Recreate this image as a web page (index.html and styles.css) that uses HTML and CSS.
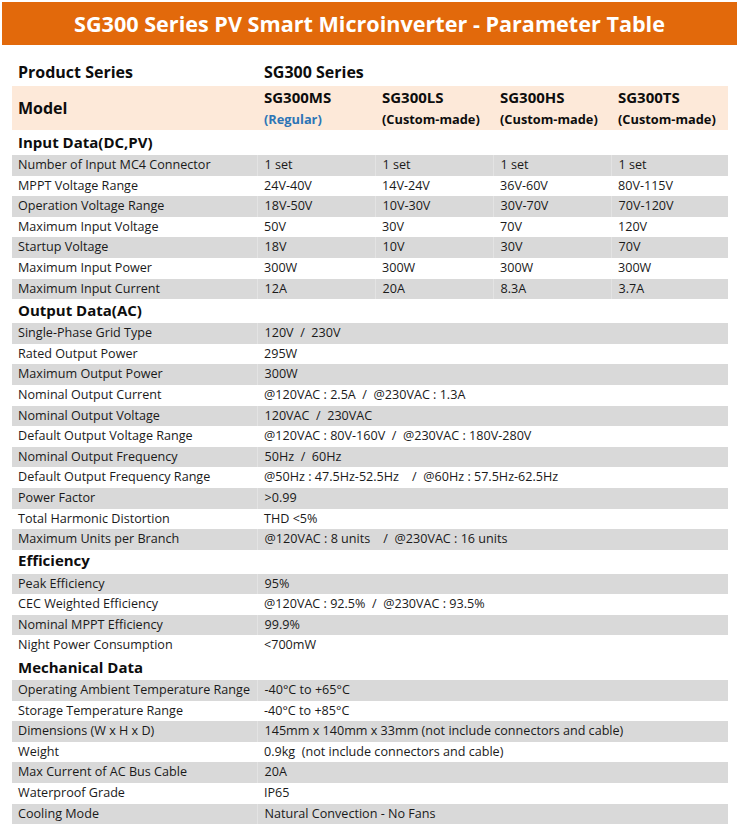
FILE: index.html
```html
<!DOCTYPE html>
<html>
<head>
<meta charset="utf-8">
<link rel="stylesheet" href="styles.css">
</head>
<body>
<div class="title">SG300 Series PV Smart Microinverter - Parameter Table</div>
<table class="params">
<colgroup><col class="c0"><col class="c1"><col class="c1"><col class="c1"><col class="c4"></colgroup>
<tr class="series"><td>Product Series</td><td colspan="4">SG300 Series</td></tr>
<tr class="model"><td class="mlabel">Model</td>
<td><div class="mname">SG300MS</div><div class="msub blue">(Regular)</div></td>
<td><div class="mname">SG300LS</div><div class="msub">(Custom-made)</div></td>
<td><div class="mname">SG300HS</div><div class="msub">(Custom-made)</div></td>
<td><div class="mname">SG300TS</div><div class="msub">(Custom-made)</div></td></tr>
<tr class="sec first"><td colspan="5">Input Data(DC,PV)</td></tr>
<tr class="g"><td>Number of Input MC4 Connector</td><td>1 set</td><td>1 set</td><td>1 set</td><td>1 set</td></tr>
<tr><td>MPPT Voltage Range</td><td>24V-40V</td><td>14V-24V</td><td>36V-60V</td><td>80V-115V</td></tr>
<tr class="g"><td>Operation Voltage Range</td><td>18V-50V</td><td>10V-30V</td><td>30V-70V</td><td>70V-120V</td></tr>
<tr><td>Maximum Input Voltage</td><td>50V</td><td>30V</td><td>70V</td><td>120V</td></tr>
<tr class="g"><td>Startup Voltage</td><td>18V</td><td>10V</td><td>30V</td><td>70V</td></tr>
<tr><td>Maximum Input Power</td><td>300W</td><td>300W</td><td>300W</td><td>300W</td></tr>
<tr class="g"><td>Maximum Input Current</td><td>12A</td><td>20A</td><td>8.3A</td><td>3.7A</td></tr>
<tr class="sec"><td colspan="5">Output Data(AC)</td></tr>
<tr class="g"><td>Single-Phase Grid Type</td><td colspan="4">120V &nbsp;/ &nbsp;230V</td></tr>
<tr><td>Rated Output Power</td><td colspan="4">295W</td></tr>
<tr class="g"><td>Maximum Output Power</td><td colspan="4">300W</td></tr>
<tr><td>Nominal Output Current</td><td colspan="4">@120VAC : 2.5A &nbsp;/ &nbsp;@230VAC : 1.3A</td></tr>
<tr class="g"><td>Nominal Output Voltage</td><td colspan="4">120VAC &nbsp;/ &nbsp;230VAC</td></tr>
<tr><td>Default Output Voltage Range</td><td colspan="4">@120VAC : 80V-160V &nbsp;/ &nbsp;@230VAC : 180V-280V</td></tr>
<tr class="g"><td>Nominal Output Frequency</td><td colspan="4">50Hz &nbsp;/ &nbsp;60Hz</td></tr>
<tr><td>Default Output Frequency Range</td><td colspan="4">@50Hz : 47.5Hz-52.5Hz &nbsp; &nbsp;/ &nbsp;@60Hz : 57.5Hz-62.5Hz</td></tr>
<tr class="g"><td>Power Factor</td><td colspan="4">&gt;0.99</td></tr>
<tr><td>Total Harmonic Distortion</td><td colspan="4">THD &lt;5%</td></tr>
<tr class="g"><td>Maximum Units per Branch</td><td colspan="4">@120VAC : 8 units &nbsp; &nbsp;/ &nbsp;@230VAC : 16 units</td></tr>
<tr class="sec"><td colspan="5">Efficiency</td></tr>
<tr class="g"><td>Peak Efficiency</td><td colspan="4">95%</td></tr>
<tr><td>CEC Weighted Efficiency</td><td colspan="4">@120VAC : 92.5% &nbsp;/ &nbsp;@230VAC : 93.5%</td></tr>
<tr class="g"><td>Nominal MPPT Efficiency</td><td colspan="4">99.9%</td></tr>
<tr><td>Night Power Consumption</td><td colspan="4">&lt;700mW</td></tr>
<tr class="sec"><td colspan="5">Mechanical Data</td></tr>
<tr class="g"><td>Operating Ambient Temperature Range</td><td colspan="4">-40°C to +65°C</td></tr>
<tr><td>Storage Temperature Range</td><td colspan="4">-40°C to +85°C</td></tr>
<tr class="g"><td>Dimensions (W x H x D)</td><td colspan="4">145mm x 140mm x 33mm (not include connectors and cable)</td></tr>
<tr><td>Weight</td><td colspan="4">0.9kg &nbsp;(not include connectors and cable)</td></tr>
<tr class="g"><td>Max Current of AC Bus Cable</td><td colspan="4">20A</td></tr>
<tr><td>Waterproof Grade</td><td colspan="4">IP65</td></tr>
<tr class="g"><td>Cooling Mode</td><td colspan="4">Natural Convection - No Fans</td></tr>
</table>
</body>
</html>
```
FILE: styles.css
```css
html, body {
  margin: 0;
  padding: 0;
  background: #ffffff;
}
body {
  font-family: "Open Sans", "Liberation Sans", sans-serif;
  color: #1a1a1a;
}
.title {
  margin: 2px 4px 0 2px;
  height: 43px;
  background: #e2690b;
  color: #ffffff;
  font-weight: 700;
  font-size: 21.6px;
  line-height: 43px;
  text-align: center;
}
.params {
  margin: 15px 0 0 12px;
  width: 716px;
  table-layout: fixed;
  border-collapse: collapse;
}
.c0 { width: 245px; }
.c1 { width: 118px; }
.c4 { width: 117px; }
.params td {
  padding: 0 0 0 6px;
  height: 20.6px;
  font-size: 12.6px;
  line-height: 20.6px;
  white-space: nowrap;
  overflow: hidden;
  vertical-align: middle;
}
.params td + td {
  padding-left: 7px;
}
.params tr.g td {
  background: #d9d9d9;
}
.params tr.g td + td {
  border-left: 1px solid #e3e3e3;
}
.params tr.series td {
  height: 25px;
  font-weight: 700;
  font-size: 16px;
  color: #0d0d0d;
  padding-bottom: 1px;
}
.params tr.model td {
  background: #fde9d9;
  height: 44px;
  color: #0d0d0d;
  font-weight: 700;
}
.params tr.model td.mlabel {
  font-size: 16px;
}
.mname {
  font-size: 15px;
  line-height: 22px;
}
.msub {
  font-size: 12.8px;
  line-height: 22px;
}
.blue {
  color: #2e75b6;
}
.params tr.sec td {
  height: 22px;
  padding-bottom: 2px;
  font-size: 15px;
  font-weight: 700;
  color: #0d0d0d;
}
.params tr.sec.first td {
  height: 24px;
  padding-bottom: 1px;
}
```
